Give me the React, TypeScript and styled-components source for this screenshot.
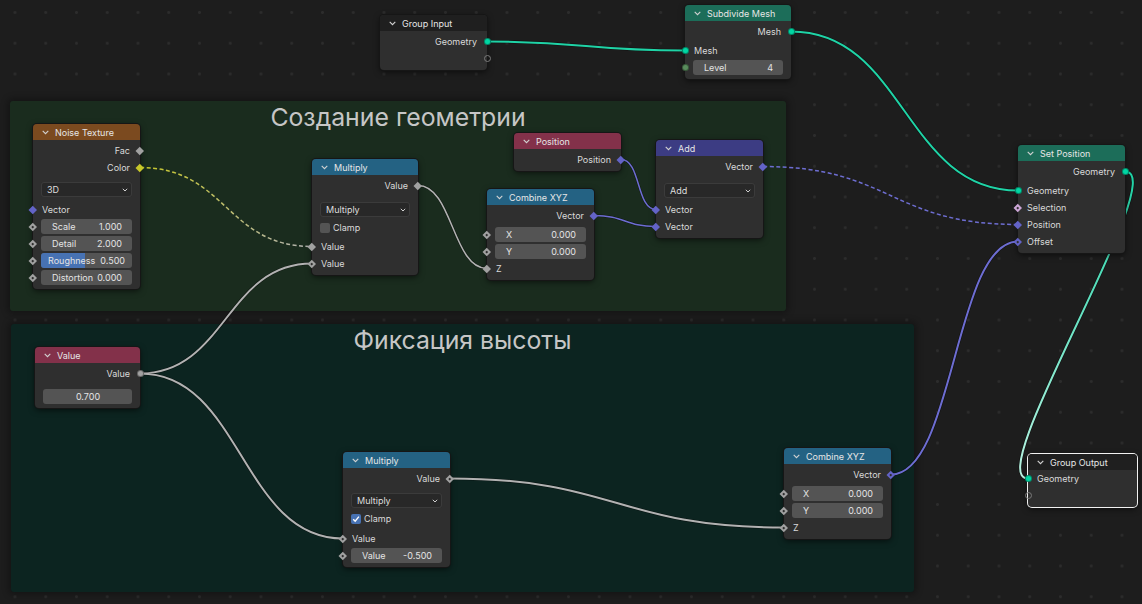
import React from 'react';
import styled, { createGlobalStyle } from 'styled-components';

const GlobalStyle = createGlobalStyle`
  html, body { margin: 0; padding: 0; background: #1d1d1d; }
  body { overflow: hidden; }
`;

const Canvas = styled.div`
  position: relative;
  width: 1142px;
  height: 604px;
  overflow: hidden;
  background-color: #1d1d1d;
  background-image: radial-gradient(circle, #2c2c2c 1.2px, rgba(44, 44, 44, 0) 1.7px);
  background-size: 30.75px 30.75px;
  background-position: -0.4px -2.9px;
  font-family: Inter, "DejaVu Sans", sans-serif;
  font-size: 9px;
  color: #dadada;
`;

const Frame = styled.div<{ $x: number; $y: number; $w: number; $h: number; $bg: string }>`
  position: absolute;
  left: ${(p) => p.$x}px;
  top: ${(p) => p.$y}px;
  width: ${(p) => p.$w}px;
  height: ${(p) => p.$h}px;
  background: ${(p) => p.$bg};
  border-radius: 3px;
  box-shadow: 0 0 6px 3px rgba(0, 0, 0, 0.28);
  display: flex;
  justify-content: center;
  align-items: flex-start;
  padding-top: 1px;
  box-sizing: border-box;
`;

const FrameTitle = styled.div`
  font-family: Inter, "DejaVu Sans", sans-serif;
  font-size: 24.8px;
  line-height: 30px;
  color: #c6c6c6;
`;

const Wires = styled.svg`
  position: absolute;
  left: 0;
  top: 0;
  width: 1142px;
  height: 604px;
  pointer-events: none;
`;

const NodeBox = styled.div<{ $x: number; $y: number; $w: number; $sel?: boolean }>`
  position: absolute;
  left: ${(p) => p.$x}px;
  top: ${(p) => p.$y}px;
  width: ${(p) => p.$w}px;
  background: #2f2f2f;
  border-radius: 4px;
  padding-bottom: 3px;
  box-shadow: 0 0 0 1px ${(p) => (p.$sel ? '#f2f2f2' : '#161616')}, 0 2px 6px rgba(0, 0, 0, 0.6);
`;

const Header = styled.div<{ $bg: string }>`
  height: 16px;
  background: ${(p) => p.$bg};
  border-radius: 4px 4px 0 0;
  display: flex;
  align-items: center;
  gap: 6px;
  padding-left: 9px;
  color: #e6e6e6;
  white-space: nowrap;
`;

const Body = styled.div`
  padding-top: 2px;
  display: flex;
  flex-direction: column;
`;

type Side = 'in' | 'out' | 'wide';

const Row = styled.div<{ $side: Side; $gap: number; $h: number }>`
  position: relative;
  height: ${(p) => p.$h}px;
  margin-top: ${(p) => p.$gap}px;
  display: flex;
  align-items: center;
  justify-content: ${(p) => (p.$side === 'out' ? 'flex-end' : 'flex-start')};
  padding: ${(p) => (p.$side === 'out' ? '0 10px 0 0' : p.$side === 'in' ? '0 0 0 9px' : '0 8px')};
  white-space: nowrap;
  color: #dadada;
`;

type Shape = 'circle' | 'hollow' | 'diamond' | 'dot';

const Socket = styled.span<{ $side: 'in' | 'out'; $shape: Shape; $color: string }>`
  position: absolute;
  top: 50%;
  box-sizing: border-box;
  ${(p) =>
    p.$shape === 'circle' || p.$shape === 'hollow'
      ? `
    width: 7px; height: 7px; margin-top: -3.5px;
    ${p.$side === 'in' ? 'left' : 'right'}: -3.5px;
    border-radius: 50%;
    background: ${p.$shape === 'circle' ? p.$color : 'transparent'};
    border: 1px solid ${p.$shape === 'circle' ? 'rgba(0,0,0,0.35)' : '#7a7a7a'};
  `
      : `
    width: 5.5px; height: 5.5px; margin-top: -2.75px;
    ${p.$side === 'in' ? 'left' : 'right'}: -2.75px;
    transform: rotate(45deg);
    background: ${p.$color};
  `}
  ${(p) =>
    p.$shape === 'dot'
      ? `
    &::after {
      content: '';
      position: absolute;
      left: 1.75px; top: 1.75px; width: 2px; height: 2px;
      background: #2b2b2b;
    }
  `
      : ''}
`;

const FieldBox = styled.div<{ $center?: boolean; $tight?: boolean }>`
  position: relative;
  flex: 1;
  height: 15px;
  border-radius: 3px;
  background: #545454;
  overflow: hidden;
  display: flex;
  align-items: center;
  justify-content: ${(p) => (p.$center ? 'center' : 'space-between')};
  padding: ${(p) => (p.$tight ? '0 7px 0 7px' : '0 10px 0 11px')};
  box-sizing: border-box;
  color: #e4e4e4;
`;

const FieldFill = styled.div`
  position: absolute;
  left: 0;
  top: 0;
  bottom: 0;
  background: #4772b3;
`;

const FieldText = styled.span`
  position: relative;
`;

const Dropdown = styled.div`
  flex: 1;
  height: 15px;
  border-radius: 3px;
  background: #282828;
  box-shadow: inset 0 0 0 1px #3b3b3b;
  display: flex;
  align-items: center;
  justify-content: space-between;
  padding: 0 4px 0 6px;
  box-sizing: border-box;
  color: #dedede;
`;

const CheckBox = styled.span<{ $on: boolean }>`
  width: 10px;
  height: 10px;
  border-radius: 2px;
  background: ${(p) => (p.$on ? '#4772b3' : '#545454')};
  display: inline-flex;
  align-items: center;
  justify-content: center;
  margin-right: 3px;
`;

const Chevron = ({ color = '#d2d2d2' }: { color?: string }) => (
  <svg width="7" height="5" viewBox="0 0 7 5">
    <polyline points="0.7,0.8 3.5,3.6 6.3,0.8" fill="none" stroke={color} strokeWidth="1.1" />
  </svg>
);

const SmallChevron = () => (
  <svg width="6" height="4" viewBox="0 0 6 4">
    <polyline points="0.8,0.8 3,3 5.2,0.8" fill="none" stroke="#cfcfcf" strokeWidth="1" />
  </svg>
);

const Tick = () => (
  <svg width="8" height="8" viewBox="0 0 8 8">
    <polyline points="1.2,4.2 3.2,6.2 6.9,1.6" fill="none" stroke="#ffffff" strokeWidth="1.4" />
  </svg>
);

type Sock = { shape: Shape; color: string };

type RowSpec =
  | { k: 'out'; label: string; sock: Sock; gap?: number }
  | { k: 'in'; label: string; sock: Sock; gap?: number }
  | { k: 'empty'; side: 'in' | 'out'; gap?: number }
  | { k: 'field'; label?: string; value: string; sock?: Sock; fill?: number; gap?: number; tight?: boolean }
  | { k: 'drop'; label: string; gap?: number }
  | { k: 'check'; label: string; on: boolean; gap?: number };

type NodeSpec = {
  title: string;
  x: number;
  y: number;
  w: number;
  color: string;
  sel?: boolean;
  rows: RowSpec[];
};

const TEAL = '#00d6a3';
const GREY = '#a1a1a1';
const PURPLE = '#6363c7';
const YELLOW = '#c7c729';
const INT = '#598c5c';
const BOOL = '#cca6d6';

const HEAD_BLUE = '#246283';
const HEAD_GEO = '#1c6d59';
const HEAD_INPUT = '#83314a';
const HEAD_GROUP = '#1f1f1f';

const nodes: NodeSpec[] = [
  {
    title: 'Group Input', x: 380, y: 15, w: 107, color: HEAD_GROUP,
    rows: [
      { k: 'out', label: 'Geometry', sock: { shape: 'circle', color: TEAL } },
      { k: 'empty', side: 'out' },
    ],
  },
  {
    title: 'Subdivide Mesh', x: 685, y: 5, w: 106, color: HEAD_GEO,
    rows: [
      { k: 'out', label: 'Mesh', sock: { shape: 'circle', color: TEAL } },
      { k: 'in', label: 'Mesh', sock: { shape: 'circle', color: TEAL }, gap: 2 },
      { k: 'field', label: 'Level', value: '4', sock: { shape: 'circle', color: INT } },
    ],
  },
  {
    title: 'Noise Texture', x: 33, y: 124, w: 107, color: '#7b4a1f',
    rows: [
      { k: 'out', label: 'Fac', sock: { shape: 'diamond', color: GREY } },
      { k: 'out', label: 'Color', sock: { shape: 'diamond', color: YELLOW } },
      { k: 'drop', label: '3D', gap: 5 },
      { k: 'in', label: 'Vector', sock: { shape: 'diamond', color: PURPLE }, gap: 3 },
      { k: 'field', label: 'Scale', value: '1.000', sock: { shape: 'dot', color: GREY } },
      { k: 'field', label: 'Detail', value: '2.000', sock: { shape: 'dot', color: GREY } },
      { k: 'field', label: 'Roughness', value: '0.500', sock: { shape: 'dot', color: GREY }, fill: 0.5, tight: true },
      { k: 'field', label: 'Distortion', value: '0.000', sock: { shape: 'dot', color: GREY } },
    ],
  },
  {
    title: 'Multiply', x: 312, y: 159, w: 106, color: HEAD_BLUE,
    rows: [
      { k: 'out', label: 'Value', sock: { shape: 'diamond', color: GREY } },
      { k: 'drop', label: 'Multiply', gap: 7 },
      { k: 'check', label: 'Clamp', on: false },
      { k: 'in', label: 'Value', sock: { shape: 'diamond', color: GREY }, gap: 1 },
      { k: 'in', label: 'Value', sock: { shape: 'dot', color: GREY } },
    ],
  },
  {
    title: 'Combine XYZ', x: 487, y: 189, w: 107, color: HEAD_BLUE,
    rows: [
      { k: 'out', label: 'Vector', sock: { shape: 'diamond', color: PURPLE } },
      { k: 'field', label: 'X', value: '0.000', sock: { shape: 'dot', color: GREY }, gap: 2 },
      { k: 'field', label: 'Y', value: '0.000', sock: { shape: 'dot', color: GREY } },
      { k: 'in', label: 'Z', sock: { shape: 'diamond', color: GREY } },
    ],
  },
  {
    title: 'Position', x: 514, y: 133, w: 107, color: HEAD_INPUT,
    rows: [{ k: 'out', label: 'Position', sock: { shape: 'diamond', color: PURPLE } }],
  },
  {
    title: 'Add', x: 656, y: 140, w: 107, color: '#3c3c83',
    rows: [
      { k: 'out', label: 'Vector', sock: { shape: 'diamond', color: PURPLE } },
      { k: 'drop', label: 'Add', gap: 7 },
      { k: 'in', label: 'Vector', sock: { shape: 'diamond', color: PURPLE }, gap: 2 },
      { k: 'in', label: 'Vector', sock: { shape: 'diamond', color: PURPLE } },
    ],
  },
  {
    title: 'Set Position', x: 1018, y: 145, w: 107, color: HEAD_GEO,
    rows: [
      { k: 'out', label: 'Geometry', sock: { shape: 'circle', color: TEAL } },
      { k: 'in', label: 'Geometry', sock: { shape: 'circle', color: TEAL }, gap: 2 },
      { k: 'in', label: 'Selection', sock: { shape: 'dot', color: BOOL } },
      { k: 'in', label: 'Position', sock: { shape: 'diamond', color: PURPLE } },
      { k: 'in', label: 'Offset', sock: { shape: 'dot', color: PURPLE } },
    ],
  },
  {
    title: 'Value', x: 35, y: 347, w: 105, color: HEAD_INPUT,
    rows: [
      { k: 'out', label: 'Value', sock: { shape: 'circle', color: GREY } },
      { k: 'field', value: '0.700', gap: 6 },
    ],
  },
  {
    title: 'Multiply', x: 343, y: 452, w: 107, color: HEAD_BLUE,
    rows: [
      { k: 'out', label: 'Value', sock: { shape: 'dot', color: GREY } },
      { k: 'drop', label: 'Multiply', gap: 5 },
      { k: 'check', label: 'Clamp', on: true },
      { k: 'in', label: 'Value', sock: { shape: 'dot', color: GREY }, gap: 2 },
      { k: 'field', label: 'Value', value: '-0.500', sock: { shape: 'dot', color: GREY } },
    ],
  },
  {
    title: 'Combine XYZ', x: 784, y: 448, w: 107, color: HEAD_BLUE,
    rows: [
      { k: 'out', label: 'Vector', sock: { shape: 'dot', color: PURPLE } },
      { k: 'field', label: 'X', value: '0.000', sock: { shape: 'dot', color: GREY }, gap: 2 },
      { k: 'field', label: 'Y', value: '0.000', sock: { shape: 'dot', color: GREY } },
      { k: 'in', label: 'Z', sock: { shape: 'dot', color: GREY } },
    ],
  },
  {
    title: 'Group Output', x: 1028, y: 454, w: 109, color: HEAD_GROUP, sel: true,
    rows: [
      { k: 'in', label: 'Geometry', sock: { shape: 'circle', color: TEAL }, gap: -2 },
      { k: 'empty', side: 'in' },
    ],
  },
];

type Wire = {
  a: [number, number];
  b: [number, number];
  c1: string;
  c2: string;
  dash?: boolean;
  thin?: boolean;
};

const WTEAL = '#1fd3a6';
const WGREY = '#b2b2b2';
const WPURPLE = '#6d6dd2';

const wires: Wire[] = [
  { a: [487, 41.5], b: [685, 50.5], c1: WTEAL, c2: WTEAL },
  { a: [791, 31.5], b: [1018, 190.5], c1: WTEAL, c2: WTEAL },
  { a: [1125, 171.5], b: [1028, 478.5], c1: WTEAL, c2: '#b9f3e2' },
  { a: [140, 167.5], b: [312, 246.5], c1: YELLOW, c2: WGREY, dash: true },
  { a: [418, 185.5], b: [487, 268.5], c1: WGREY, c2: WGREY, thin: true },
  { a: [140, 373.5], b: [312, 263.5], c1: WGREY, c2: WGREY },
  { a: [140, 373.5], b: [343, 538.5], c1: WGREY, c2: WGREY },
  { a: [450, 478.5], b: [784, 527.5], c1: WGREY, c2: WGREY },
  { a: [891, 474.5], b: [1018, 241.5], c1: WPURPLE, c2: WPURPLE },
  { a: [621, 159.5], b: [656, 209.5], c1: WPURPLE, c2: WPURPLE, thin: true },
  { a: [594, 215.5], b: [656, 226.5], c1: WPURPLE, c2: WPURPLE, thin: true },
  { a: [763, 166.5], b: [1018, 224.5], c1: WPURPLE, c2: WPURPLE, dash: true },
];

const wirePath = (w: Wire) => {
  const [x0, y0] = w.a;
  const [x3, y3] = w.b;
  const d = Math.max(0.5 * Math.abs(x3 - x0), 20);
  return `M ${x0} ${y0} C ${x0 + d} ${y0}, ${x3 - d} ${y3}, ${x3} ${y3}`;
};

const RowView = ({ r }: { r: RowSpec }) => {
  const gap = r.gap ?? 0;
  switch (r.k) {
    case 'out':
      return (
        <Row $side="out" $gap={gap} $h={17}>
          {r.label}
          <Socket $side="out" $shape={r.sock.shape} $color={r.sock.color} />
        </Row>
      );
    case 'in':
      return (
        <Row $side="in" $gap={gap} $h={17}>
          <Socket $side="in" $shape={r.sock.shape} $color={r.sock.color} />
          {r.label}
        </Row>
      );
    case 'empty':
      return (
        <Row $side={r.side} $gap={gap} $h={17}>
          <Socket $side={r.side} $shape="hollow" $color="#7a7a7a" />
        </Row>
      );
    case 'field':
      return (
        <Row $side="wide" $gap={gap} $h={17}>
          {r.sock && <Socket $side="in" $shape={r.sock.shape} $color={r.sock.color} />}
          <FieldBox $center={!r.label} $tight={r.tight}>
            {r.fill !== undefined && <FieldFill style={{ width: `${r.fill * 100 - 2}%` }} />}
            {r.label && <FieldText>{r.label}</FieldText>}
            <FieldText>{r.value}</FieldText>
          </FieldBox>
        </Row>
      );
    case 'drop':
      return (
        <Row $side="wide" $gap={gap} $h={17}>
          <Dropdown>
            <span>{r.label}</span>
            <SmallChevron />
          </Dropdown>
        </Row>
      );
    case 'check':
      return (
        <Row $side="wide" $gap={gap} $h={19}>
          <CheckBox $on={r.on}>{r.on && <Tick />}</CheckBox>
          {r.label}
        </Row>
      );
  }
};

const NodeView = ({ n }: { n: NodeSpec }) => (
  <NodeBox $x={n.x} $y={n.y} $w={n.w} $sel={n.sel}>
    <Header $bg={n.color}>
      <Chevron />
      <span>{n.title}</span>
    </Header>
    <Body>
      {n.rows.map((r, i) => (
        <RowView key={i} r={r} />
      ))}
    </Body>
  </NodeBox>
);

export default function App() {
  return (
    <>
      <GlobalStyle />
      <Canvas>
        <Frame $x={10} $y={101} $w={776} $h={210} $bg="#1a2c1e">
          <FrameTitle>Создание геометрии</FrameTitle>
        </Frame>
        <Frame $x={11} $y={324} $w={903} $h={268} $bg="#0c2420">
          <FrameTitle>Фиксация высоты</FrameTitle>
        </Frame>
        <Wires viewBox="0 0 1142 604">
          <defs>
            {wires.map((w, i) => (
              <linearGradient
                key={i}
                id={`wg${i}`}
                gradientUnits="userSpaceOnUse"
                x1={w.a[0]}
                y1={w.a[1]}
                x2={w.b[0]}
                y2={w.b[1]}
              >
                <stop offset="0" stopColor={w.c1} />
                <stop offset="1" stopColor={w.c2} />
              </linearGradient>
            ))}
          </defs>
          {wires.map((w, i) => (
            <g key={i}>
              {!w.dash && (
                <path
                  d={wirePath(w)}
                  fill="none"
                  stroke="rgba(0,0,0,0.45)"
                  strokeWidth={w.thin ? 2.6 : 3.2}
                />
              )}
              <path
                d={wirePath(w)}
                fill="none"
                stroke={`url(#wg${i})`}
                strokeWidth={w.dash || w.thin ? 1.5 : 2}
                strokeDasharray={w.dash ? '4 2.5' : undefined}
              />
            </g>
          ))}
        </Wires>
        {nodes.map((n, i) => (
          <NodeView key={i} n={n} />
        ))}
      </Canvas>
    </>
  );
}
